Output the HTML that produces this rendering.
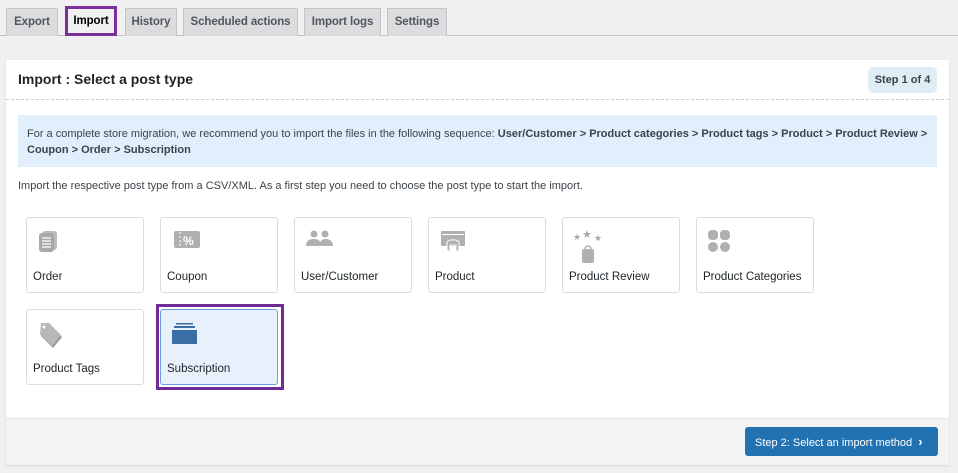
<!DOCTYPE html>
<html><head><style>
*{box-sizing:border-box;margin:0;padding:0}
body{width:958px;height:473px;background:#f0f0f1;font-family:"Liberation Sans",sans-serif;color:#1d2327;position:relative;overflow:hidden}
.tabline{position:absolute;left:0;top:35px;width:958px;height:1px;background:#c3c4c7}
.tab{position:absolute;top:8px;height:28px;background:#dcdcde;border:1px solid #c3c4c7;border-bottom:none;font-size:11.5px;font-weight:bold;color:#50575e;text-align:center;line-height:26px;white-space:nowrap;letter-spacing:-0.1px}
.tab.active{background:#f0f0f1;color:#000;border:3px solid #7b2f9b;top:6px;height:30px;line-height:24px}
.panel{position:absolute;left:6px;top:60px;width:943px;height:405px;background:#fff;box-shadow:0 1px 2px rgba(0,0,0,.1)}
.h{position:absolute;left:12px;top:11px;font-size:14px;font-weight:bold}
.step{position:absolute;left:862px;top:7px;width:69px;height:26px;background:#dfeef5;border-radius:5px;font-size:11px;font-weight:bold;color:#3c434a;text-align:center;line-height:26px}
.dash{position:absolute;left:0;top:39px;width:943px;border-top:1px dashed #ccc}
.info{position:absolute;left:12px;top:55px;width:919px;height:52px;background:#e1effc;font-size:11px;line-height:16px;padding:11px 9px;color:#3c434a}
.desc{position:absolute;left:12px;top:120px;font-size:11px;color:#3c434a}
.card{position:absolute;width:118px;height:76px;border:1px solid #dcdcde;border-radius:3px;background:#fff}
.card span{position:absolute;left:6px;top:53px;font-size:11.5px;color:#1d2327}
.card svg{position:absolute;left:10px;top:11px}
.sel{background:#e8f0fc;border-color:#6d9fd6}
.outline{position:absolute;left:150px;top:244px;width:128px;height:86px;border:3px solid #6f2b93}
.foot{position:absolute;left:0;top:358px;width:943px;height:47px;background:#f3f3f3;border-top:1px solid #e5e5e5}
.btn{position:absolute;left:739px;top:8px;width:193px;height:29px;background:#2271b1;border-radius:3px;color:#fff;font-size:11px;line-height:29px;padding-left:10px}
</style></head><body>
<div class="tabline"></div>
<div class="tab" style="left:6px;width:52px">Export</div>
<div class="tab active" style="left:65px;width:52px">Import</div>
<div class="tab" style="left:125px;width:52px">History</div>
<div class="tab" style="left:183px;width:115px">Scheduled actions</div>
<div class="tab" style="left:304px;width:77px">Import logs</div>
<div class="tab" style="left:387px;width:60px">Settings</div>
<div class="panel">
<div class="h">Import : Select a post type</div>
<div class="step">Step 1 of 4</div>
<div class="dash"></div>
<div class="info">For a complete store migration, we recommend you to import the files in the following sequence: <b>User/Customer &gt; Product categories &gt; Product tags &gt; Product &gt; Product Review &gt; Coupon &gt; Order &gt; Subscription</b></div>
<div class="desc">Import the respective post type from a CSV/XML. As a first step you need to choose the post type to start the import.</div>

<div class="card" style="left:20px;top:157px"><svg width="24" height="26"><rect x="5" y="2" width="15" height="19" rx="3" fill="#bbb"/><rect x="2" y="4" width="15" height="19" rx="3" fill="#a8a8a8"/><path d="M5 9h9M5 12h9M5 15h9M5 18h9" stroke="#fff" stroke-width="1.2"/></svg><span>Order</span></div>
<div class="card" style="left:154px;top:157px"><svg width="30" height="22"><rect x="3" y="2" width="26" height="17" rx="2" fill="#b0b0b0"/><path d="M9 3v15" stroke="#fff" stroke-dasharray="2 2"/><text x="12" y="16" font-size="12" font-weight="bold" fill="#fff" font-family="Liberation Sans">%</text></svg><span>Coupon</span></div>
<div class="card" style="left:288px;top:157px"><svg width="32" height="22"><circle cx="9" cy="5" r="3.5" fill="#b0b0b0"/><circle cx="20" cy="5" r="3.5" fill="#b0b0b0"/><path d="M1 17c0-6 4-7 8-7s7 2 8 7zM14 17c1-5 3-7 6-7s8 1 8 7z" fill="#b0b0b0"/></svg><span>User/Customer</span></div>
<div class="card" style="left:422px;top:157px"><svg width="28" height="26"><rect x="2" y="2" width="24" height="15" rx="1" fill="#b0b0b0"/><rect x="3" y="5" width="22" height="1" fill="#fff"/><path d="M8 22v-9l3-2h6l3 2v9h-3v-6h-6v6z" fill="#b0b0b0" stroke="#fff" stroke-width="1"/></svg><span>Product</span></div>
<div class="card" style="left:556px;top:157px"><svg width="34" height="36"><text x="0" y="11" font-size="9" fill="#a8a8a8">★</text><text x="9" y="9" font-size="11" fill="#a8a8a8">★</text><text x="21" y="12" font-size="9" fill="#a8a8a8">★</text><rect x="9" y="20" width="12" height="14" rx="2" fill="#b0b0b0"/><path d="M12 20a3 3 0 0 1 6 0" stroke="#b0b0b0" fill="none" stroke-width="1.5"/></svg><span>Product Review</span></div>
<div class="card" style="left:690px;top:157px"><svg width="24" height="24"><rect x="1" y="1" width="10" height="10" rx="4" fill="#b0b0b0"/><rect x="13" y="1" width="10" height="10" rx="4" fill="#b0b0b0"/><circle cx="6" cy="18" r="5" fill="#b0b0b0"/><circle cx="18" cy="18" r="5" fill="#b0b0b0"/></svg><span>Product Categories</span></div>

<div class="card" style="left:20px;top:249px"><svg width="26" height="30"><path d="M4 2h8l12 12-9 11L3 13z" fill="#999" transform="translate(1,2)"/><path d="M4 2h8l12 12-9 11L3 13z" fill="#b8b8b8"/><circle cx="7" cy="6" r="1.5" fill="#fff"/></svg><span>Product Tags</span></div>
<div class="card sel" style="left:154px;top:249px"><svg width="28" height="24"><rect x="1" y="9" width="25" height="14" fill="#3b6ea5"/><rect x="3" y="5" width="21" height="2" fill="#3b6ea5"/><rect x="5" y="2" width="17" height="1.5" fill="#3b6ea5"/></svg><span>Subscription</span></div>
<div class="outline"></div>

<div class="foot"><div class="btn">Step 2: Select an import method &nbsp;<b style="font-size:13px">&#x203A;</b></div></div>
</div>
</body></html>
